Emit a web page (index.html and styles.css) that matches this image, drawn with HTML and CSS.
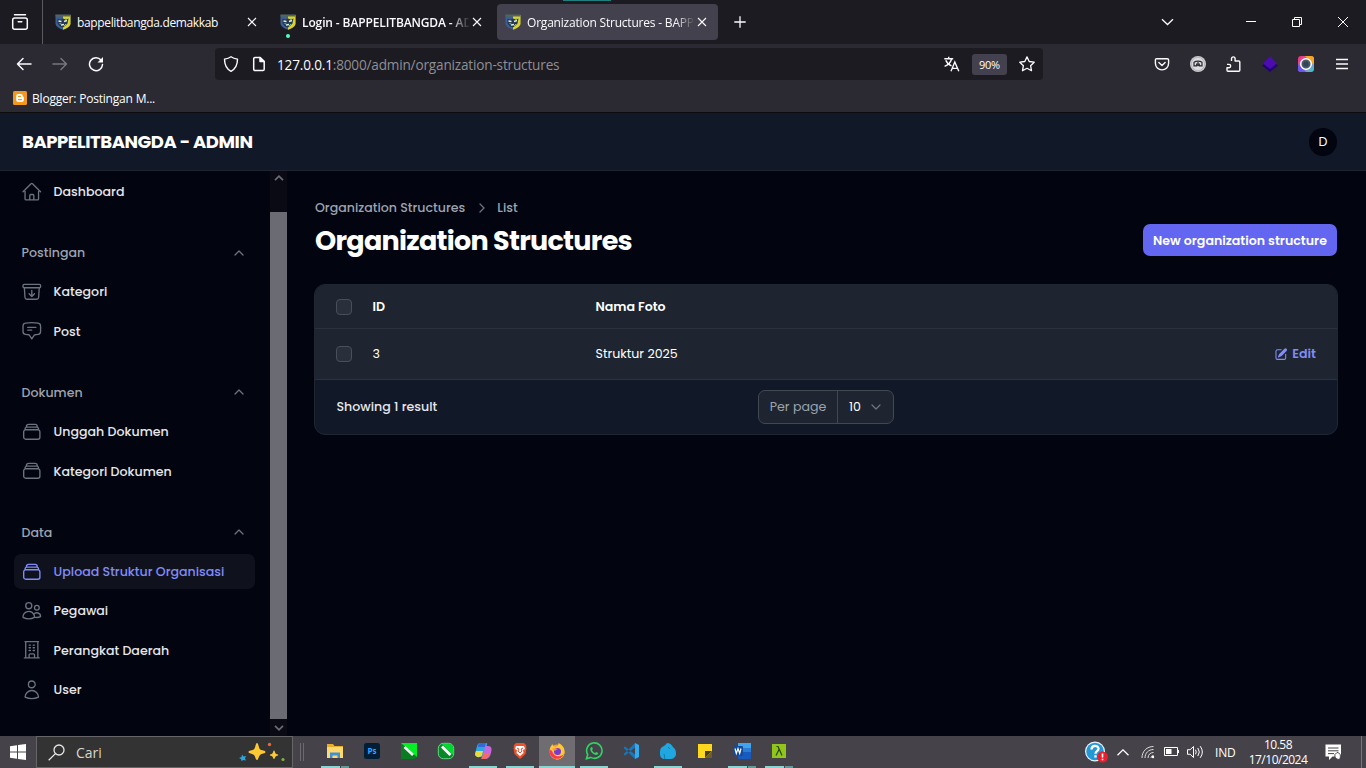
FILE: index.html
```html
<!DOCTYPE html>
<html lang="id">
<head>
<meta charset="utf-8">
<title>Organization Structures - BAPPELITBANGDA - ADMIN</title>
<link rel="stylesheet" href="styles.css">
</head>
<body>
<svg class="defs" aria-hidden="true">
  <symbol id="crest" viewBox="0 0 16 16">
    <path d="M.5.8h15v8.700c0 3-4 5-7.500 6.200C4.500 14.500.5 12.500.5 9.500z" fill="#3b5f98"/>
    <path d="M8 1h7.500v8.500c0 3-4 5-7.500 6.200z" fill="#dcd328"/>
    <path d="M.5.6h15v1.900H.5z" fill="#5c6545"/>
    <path d="M2.500 4.500l3 1 2.500-1 3 1 2.500-1-1 5-2 2-2.500 2-3-1-2.500-3z" fill="#27394d"/>
    <path d="M3.500 7l3 .5M9 7.500l3-1M6 11l3-.5" stroke="#e1eee0" stroke-width="1.500"/>
    <path d="M4.500 9.500l2 .6M10 5l2 .2M9 12l2-2" stroke="#65bdca" stroke-width="1"/>
  </symbol>
  <symbol id="close" viewBox="0 0 10 10"><path d="M1 1l8 8M9 1L1 9" fill="none" stroke="#fbfbfe" stroke-width="1.100"/></symbol>
  <symbol id="up" viewBox="0 0 10 6"><path d="M1 5l4-4 4 4" fill="none" stroke="currentColor" stroke-width="1.300" stroke-linecap="round" stroke-linejoin="round"/></symbol>
  <symbol id="stack" viewBox="0 0 24 24"><path d="M6 6.878V6a2.250 2.250 0 012.250-2.250h7.500A2.250 2.250 0 0118 6v.878m-12 0c.235-.083.487-.128.75-.128h10.500c.263 0 .515.045.75.128m-12 0A2.250 2.250 0 004.500 9v.878m13.500-3A2.250 2.250 0 0119.500 9v.878m0 0a2.246 2.246 0 00-.75-.128H5.250c-.263 0-.515.045-.75.128m15 0A2.250 2.250 0 0121 12v6a2.250 2.250 0 01-2.250 2.250H5.250A2.250 2.250 0 013 18v-6c0-.98.626-1.813 1.500-2.122"/></symbol>
</svg>

<header class="tabs">
  <div class="recent"><svg width="18" height="18" viewBox="0 0 18 18" fill="none" stroke="#fbfbfe" stroke-width="1.500" stroke-linecap="round"><rect x="1.700" y="5" width="14.600" height="11.200" rx="2"/><path d="M3.500 1.700h11M7.200 8.700h3.600"/></svg></div>
  <div class="tab"><svg class="fav"><use href="#crest"/></svg><span class="tab-t t1">bappelitbangda.demakkab</span><svg class="x"><use href="#close"/></svg></div>
  <div class="tab"><svg class="fav"><use href="#crest"/></svg><span class="tab-t bold fade">Login - BAPPELITBANGDA - ADMIN</span><svg class="x"><use href="#close"/></svg><i class="dot"></i></div>
  <div class="tab active"><svg class="fav"><use href="#crest"/></svg><span class="tab-t t3 fade">Organization Structures - BAPPELITBANGDA</span><svg class="x"><use href="#close"/></svg><i class="glint"></i></div>
  <svg class="plus" viewBox="0 0 12 12"><path d="M6 .3v11.400M.3 6h11.400" stroke="#fbfbfe" stroke-width="1.300"/></svg>
  <div class="win">
    <svg class="w-down" viewBox="0 0 13 8"><path d="M1 1.200l5.500 5.300L12 1.200" fill="none" stroke="#fbfbfe" stroke-width="1.300"/></svg>
    <svg class="w-min" viewBox="0 0 10 10"><path d="M0 4.500h10" stroke="#fff"/></svg>
    <svg class="w-max" viewBox="0 0 10 10" fill="none" stroke="#fff"><path d="M.5 2.500h7v7h-7zM2.500 2.500v-2h7v7h-2"/></svg>
    <svg class="w-x" viewBox="0 0 10 10"><path d="M0 0l10 10M10 0L0 10" stroke="#fff"/></svg>
  </div>
</header>

<section class="toolbar">
  <div class="nav">
    <svg width="16" height="16" viewBox="0 0 16 16" fill="none" stroke="#fbfbfe" stroke-width="1.500" stroke-linecap="round" stroke-linejoin="round"><path d="M15 8H1.500M7 2.500L1.500 8 7 13.500"/></svg>
    <svg width="16" height="16" viewBox="0 0 16 16" fill="none" stroke="#77767e" stroke-width="1.500" stroke-linecap="round" stroke-linejoin="round"><path d="M1 8h13.500M9 2.500L14.500 8 9 13.500"/></svg>
    <svg width="16" height="16" viewBox="0 0 16 16"><path d="M13 4A6.500 6.500 0 1 0 14.500 8.500" fill="none" stroke="#fbfbfe" stroke-width="1.500" stroke-linecap="round"/><path d="M15 1v5.500H9.500z" fill="#fbfbfe"/></svg>
  </div>
  <div class="url">
    <svg width="16" height="16" viewBox="0 0 16 16" fill="none" stroke="#fbfbfe" stroke-width="1.400" stroke-linejoin="round"><path d="M8 .8c2 1.500 4 2 6.500 2.300 0 5-.8 9.400-6.500 12.200C2.300 12.500 1.500 8.100 1.500 3.100 4 2.800 6 2.300 8 .8z"/></svg>
    <svg width="16" height="16" viewBox="0 0 16 16" fill="none" stroke="#fbfbfe" stroke-width="1.500" stroke-linejoin="round"><path d="M4 1.500h5l4.200 4v7.700a1.300 1.300 0 0 1-1.300 1.300H4a1.300 1.300 0 0 1-1.300-1.300V2.800A1.300 1.300 0 0 1 4 1.500z"/><path d="M9 1.500v4h4.200z" fill="#fbfbfe"/></svg>
    <span class="addr"><b>127.0.0.1</b>:8000/admin/organization-structures</span>
    <svg class="tr" viewBox="0 0 16 16" fill="none" stroke="#fbfbfe" stroke-width="1.400"><path d="M.3 2.700h8.900M4.700.7v2M1.800 4.200c1 2.500 3.200 4.600 5.700 5.600M7.600 3C6.600 6.400 4 9 .6 10.300M7 15.300l3.800-9.300 4 9.300M8.300 12.400h5.200"/></svg>
    <span class="zoom">90%</span>
    <svg width="16" height="16" viewBox="0 0 16 16" fill="none" stroke="#fbfbfe" stroke-width="1.300" stroke-linejoin="round"><path d="M8 .9l2.200 4.600 5 .7-3.600 3.500.9 5L8 12.300l-4.500 2.400.9-5L.8 6.200l5-.7z"/></svg>
  </div>
  <div class="ext">
    <svg viewBox="0 0 16 16" fill="none" stroke="#fbfbfe" stroke-width="1.400" stroke-linecap="round" stroke-linejoin="round"><path d="M2.700 2.700h10.600c.8 0 1.300.6 1.300 1.300v3.300a6.600 6.600 0 0 1-13.200 0V4c0-.7.5-1.300 1.300-1.300z"/><path d="M4.900 6.500L8 9.400l3.100-2.900"/></svg>
    <svg viewBox="0 0 16 16"><circle cx="8" cy="8" r="8" fill="#c9c9ce"/><circle cx="8" cy="8" r="6.500" fill="#dedee2" stroke="#aaa9b2" stroke-width=".7"/><path d="M4 6.200c2-1.500 6-1.500 8 0v3.600H9.300V7.500M4 6v3.800h2.700V7.500M8 6v4" fill="none" stroke="#29282c" stroke-width="1.200"/></svg>
    <svg viewBox="0 0 16 16" fill="none" stroke="#fbfbfe" stroke-width="1.400" stroke-linejoin="round"><path d="M5.500 5V2.700a1.800 1.800 0 0 1 3.600 0V5h3.700a1 1 0 0 1 1 1v8.300a1 1 0 0 1-1 1H2a1 1 0 0 1-1-1v-2.500h2a1.700 1.700 0 0 0 0-3.400H1"/></svg>
    <svg viewBox="0 0 16 16"><path d="M0 9.500L8 4l8 5.500L8 16z" fill="#22006f"/><path d="M1 7.500L8 .3l7 7.200-7 5.500z" fill="#4b0cb0"/></svg>
    <svg viewBox="0 0 16 16"><defs><linearGradient id="ca" x1="0" y1="0" x2="1" y2="1"><stop offset="0" stop-color="#f52a69"/><stop offset=".5" stop-color="#c06cc4"/><stop offset="1" stop-color="#21d8d0"/></linearGradient></defs><rect width="16" height="16" rx="3" fill="url(#ca)"/><path d="M7 0h6a3 3 0 0 1 3 3v6z" fill="#f7a620"/><path d="M0 8l8 8H3a3 3 0 0 1-3-3z" fill="#6a55f5"/><circle cx="8" cy="8" r="5.300" fill="#485868" stroke="#fff" stroke-width="1.500"/><circle cx="8" cy="8" r="2.600" fill="#304456"/></svg>
    <svg viewBox="0 0 16 16"><path d="M2 3.500h12M2 8h12M2 12.500h12" stroke="#fbfbfe" stroke-width="1.300"/></svg>
  </div>
</section>
<section class="bookmarks">
  <svg width="14" height="14" viewBox="0 0 14 14"><rect width="14" height="14" rx="1.500" fill="#f3981f"/><path d="M5 3h2.800a2 2 0 0 1 2 2c0 1 .8.500 1 1.200V9a2 2 0 0 1-2 2H5.200a2 2 0 0 1-2-2V5A2 2 0 0 1 5 3z" fill="#fff"/><path d="M5.500 5.400h2M5.500 8.600h3" stroke="#f3981f" stroke-width="1.100" stroke-linecap="round"/></svg>
  <span>Blogger: Postingan M...</span>
</section>

<div class="topbar"><strong>BAPPELITBANGDA - ADMIN</strong><span class="avatar">D</span></div>

<div class="page">
  <aside class="side">
    <nav class="menu">
      <div class="group">
        <a class="item"><svg viewBox="0 0 24 24"><path d="M2.250 12l8.954-8.955c.44-.439 1.152-.439 1.591 0L21.750 12M4.500 9.750v10.125c0 .621.504 1.125 1.125 1.125H9.750v-4.875c0-.621.504-1.125 1.125-1.125h2.250c.621 0 1.125.504 1.125 1.125V21h4.125c.621 0 1.125-.504 1.125-1.125V9.750M8.250 21h8.250"/></svg><span>Dashboard</span></a>
      </div>
      <div class="group">
        <div class="label"><span>Postingan</span><svg class="chev"><use href="#up"/></svg></div>
        <a class="item"><svg viewBox="0 0 24 24"><path d="M20.250 7.500l-.625 10.632a2.250 2.250 0 01-2.247 2.118H6.622a2.250 2.250 0 01-2.247-2.118L3.750 7.500m8.250 3v6.750m0 0l-3-3m3 3l3-3M3.375 7.500h17.250c.621 0 1.125-.504 1.125-1.125v-1.500c0-.621-.504-1.125-1.125-1.125H3.375c-.621 0-1.125.504-1.125 1.125v1.500c0 .621.504 1.125 1.125 1.125z"/></svg><span>Kategori</span></a>
        <a class="item"><svg viewBox="0 0 24 24"><path d="M7.500 8.250h9m-9 3H12m-9.750 1.510c0 1.600 1.123 2.994 2.707 3.227 1.129.166 2.270.293 3.423.379.35.026.67.210.865.501L12 21l2.755-4.133a1.140 1.140 0 01.865-.501 48.172 48.172 0 003.423-.379c1.584-.233 2.707-1.626 2.707-3.228V6.741c0-1.602-1.123-2.995-2.707-3.228A48.394 48.394 0 0012 3c-2.392 0-4.744.175-7.043.513C3.373 3.746 2.250 5.140 2.250 6.741v6.018z"/></svg><span>Post</span></a>
      </div>
      <div class="group">
        <div class="label"><span>Dokumen</span><svg class="chev"><use href="#up"/></svg></div>
        <a class="item"><svg><use href="#stack"/></svg><span>Unggah Dokumen</span></a>
        <a class="item"><svg><use href="#stack"/></svg><span>Kategori Dokumen</span></a>
      </div>
      <div class="group">
        <div class="label"><span>Data</span><svg class="chev"><use href="#up"/></svg></div>
        <a class="item current"><svg><use href="#stack"/></svg><span>Upload Struktur Organisasi</span></a>
        <a class="item"><svg viewBox="0 0 24 24"><path d="M15 19.128a9.380 9.380 0 002.625.372 9.337 9.337 0 004.121-.952 4.125 4.125 0 00-7.533-2.493M15 19.128v-.003c0-1.113-.285-2.160-.786-3.070M15 19.128v.106A12.318 12.318 0 018.624 21c-2.331 0-4.512-.645-6.374-1.766l-.001-.109a6.375 6.375 0 0111.964-3.070M12 6.375a3.375 3.375 0 11-6.750 0 3.375 3.375 0 016.750 0zm8.250 2.250a2.625 2.625 0 11-5.250 0 2.625 2.625 0 015.250 0z"/></svg><span>Pegawai</span></a>
        <a class="item"><svg viewBox="0 0 24 24"><path d="M3.750 21h16.500M4.500 3h15M5.250 3v18m13.500-18v18M9 6.750h1.500m-1.500 3h1.500m-1.500 3h1.500m3-6H15m-1.500 3H15m-1.500 3H15M9 21v-3.375c0-.621.504-1.125 1.125-1.125h3.750c.621 0 1.125.504 1.125 1.125V21"/></svg><span>Perangkat Daerah</span></a>
        <a class="item"><svg viewBox="0 0 24 24"><path d="M15.750 6a3.750 3.750 0 11-7.500 0 3.750 3.750 0 017.500 0zM4.501 20.118a7.500 7.500 0 0114.998 0A17.933 17.933 0 0112 21.750c-2.676 0-5.216-.584-7.499-1.632z"/></svg><span>User</span></a>
      </div>
    </nav>
    <div class="scroll">
      <svg viewBox="0 0 10 6"><path d="M1 5.200l4-4 4 4" fill="none" stroke="#6c6c72" stroke-width="1.700"/></svg>
      <div class="thumb"></div>
      <svg viewBox="0 0 10 6"><path d="M1 .8l4 4 4-4" fill="none" stroke="#6c6c72" stroke-width="1.700"/></svg>
    </div>
  </aside>
  <main class="main">
    <div class="crumbs"><span>Organization Structures</span><svg viewBox="0 0 6 10"><path d="M1 1l4 4-4 4" fill="none" stroke="#71717a" stroke-width="1.300" stroke-linecap="round"/></svg><span>List</span></div>
    <div class="head"><h1>Organization Structures</h1><button class="new">New organization structure</button></div>
    <div class="card">
      <div class="row th"><i class="box"></i><span>ID</span><span>Nama Foto</span></div>
      <div class="row td"><i class="box"></i><span>3</span><span>Struktur 2025</span>
        <a class="edit"><svg viewBox="0 0 20 20" fill="currentColor"><path d="M5.433 13.917l1.262-3.155A4 4 0 0 1 7.580 9.420l6.920-6.918a2.121 2.121 0 0 1 3 3l-6.920 6.918c-.383.383-.84.685-1.343.886l-3.154 1.262a.5.5 0 0 1-.65-.65Z"/><path d="M3.500 5.750c0-.69.56-1.250 1.250-1.250H10A.75.75 0 0 0 10 3H4.750A2.750 2.750 0 0 0 2 5.750v9.500A2.750 2.750 0 0 0 4.750 18h9.500A2.750 2.750 0 0 0 17 15.250V10a.75.75 0 0 0-1.500 0v5.250c0 .69-.56 1.250-1.250 1.250h-9.500c-.69 0-1.250-.56-1.250-1.250v-9.500Z"/></svg><span>Edit</span></a></div>
      <div class="foot"><span>Showing 1 result</span>
        <div class="per"><span class="pp">Per page</span><span class="num">10<svg class="chev"><use href="#up"/></svg></span></div></div>
    </div>
  </main>
</div>

<footer class="task">
  <div class="start"><svg width="16" height="16" viewBox="0 0 16 16" fill="#fff"><path d="M0 2.200L7 1.200v6.300H0zM8 1.100L16 0v7.500H8zM0 8.500h7v6.300l-7-1zM8 8.500h8V16l-8-1.100z"/></svg></div>
  <div class="search">
    <svg width="17" height="17" viewBox="0 0 17 17" fill="none" stroke="#e6e6e6" stroke-width="1.300"><circle cx="11" cy="6" r="5"/><path d="M7.400 9.600L.7 16.300"/></svg>
    <span>Cari</span>
    <svg class="spark" width="46" height="20" viewBox="0 0 46 20"><path d="M18 1c1.500 0 1.700 5 3 6.300S26.500 8.500 26.500 10s-4 1.500-5.500 3-1.500 5-3 5-1.500-3.700-3-5-5.500-1.500-5.500-3 4-1.500 5.500-2.700S16.500 1 18 1z" fill="#fcc934"/><path d="M35 8.500c.8 0 .9 2.300 1.600 3s2.600.7 2.600 1.500-1.900.8-2.600 1.500-.8 2.500-1.600 2.500-.9-1.800-1.600-2.500-2.600-.7-2.600-1.500 1.900-.8 2.600-1.500.8-3 1.600-3z" fill="#fcc934"/><path d="M3 12.500l1.500 2 2.500-.5-1 2.500 1 2-2.500-.5L2.500 19 2 17l-2-1 2.500-1z" fill="#2ea5dc"/><circle cx="30.500" cy="2.500" r="1.700" fill="#e06a3a"/><circle cx="44" cy="17.500" r="1.600" fill="#7cb342"/></svg>
  </div>
  <div class="grip"></div>
  <div class="apps">
    <div class="app run2"><svg viewBox="0 0 18 18"><path d="M1 2h6l1.500 2H17v12H1z" fill="#e8ad2d"/><path d="M1 5h16v11H1z" fill="#ffd970"/><path d="M4 16v-5.500h10V16h-2.500v-2.500h-5V16z" fill="#3f93d3"/></svg></div>
    <div class="app"><svg viewBox="0 0 18 18"><rect x="1" y="1" width="16" height="16" rx="2.500" fill="#001e36"/><text x="9" y="12.300" text-anchor="middle" class="ps">Ps</text></svg></div>
    <div class="app"><svg viewBox="0 0 18 18"><path d="M1 1h16v12a4 4 0 0 1-4 4H1z" fill="#0a7d22"/><path d="M1 1h16v14z" fill="#00ef25"/><path d="M4.500 5l8.500 8" stroke="#fff" stroke-width="2.600"/></svg></div>
    <div class="app"><svg viewBox="0 0 18 18"><rect x="1.300" y="1.300" width="15.400" height="15.400" rx="5" fill="#088828" stroke="#72ee91" stroke-width=".8"/><path d="M5 2h7a4 4 0 0 1 4 4v7z" fill="#00d92d"/><path d="M5 4.500l8.500 8.500" stroke="#fff" stroke-width="2.800"/></svg></div>
    <div class="app run"><svg viewBox="0 0 18 18"><path d="M6 1h6c2 0 1 2 0 5l-2 7c-1 3-3 2-5 2-5 0-4-4-3-7s1-7 4-7z" fill="#29a7de"/><path d="M2 9h7l-1 4c-1 3-7 3-7-1z" fill="#eadb3c"/><path d="M11 4h3c4 0 4 3 3 7s-3 6-6 6H7c2-1 3-6 4-13z" fill="#c767de"/><path d="M9 11h7c-1 3-2 5-5 6H7c1-1 1.500-3 2-6z" fill="#f26d5f"/><path d="M6 1h6c-1 2-1 3-1 4H4c0-2 1-4 2-4z" fill="#3269d4"/></svg></div>
    <div class="app run"><svg viewBox="0 0 18 18"><path d="M5 1h8l2 2 .5 3-1 6L9 17l-5.500-5-1-6L3 3z" fill="#f0502a"/><path d="M5 4h8l1 3-2 1 .5 3L9 14l-3.500-3L6 8 4 7z" fill="#fff"/><path d="M6 6l2 1-1 2 2 2 2-2-1-2 2-1" fill="none" stroke="#ed512d"/></svg></div>
    <div class="app on"><svg viewBox="0 0 18 18"><circle cx="9" cy="10" r="7.500" fill="#ff9824"/><path d="M1.700 9C1.500 5 4 3 4.500 2c.2 2 1 2.500 3 3 2-.5 3-2 3-4 4 2 6.500 5 6 10a7.500 7.500 0 0 1-8 6.500z" fill="#ffc936"/><path d="M1.500 9a7.500 7.500 0 0 0 14.500 3c-3 3-8 3-10 .5S3.500 6 1.500 9z" fill="#f63b57"/><circle cx="9.500" cy="9.500" r="3.500" fill="#7a3ad0"/><path d="M4 6.500c2-.8 3.500 0 5.500.5l-2 1.500H6z" fill="#ff9824"/></svg></div>
    <div class="app run"><svg viewBox="0 0 18 18"><path d="M1.500 16.700l1.200-4.200a7.700 7.700 0 1 1 3 2.900z" fill="none" stroke="#30d264" stroke-width="1.600"/><path d="M6.700 5c.7-.3 1 1.600 1.200 2L7 8c.7 1.500 1.500 2.200 3 3l1.200-1 2 1c0 1.500-1.200 2-2.500 1.900C8 12.500 5.500 10 5.200 7.300 5.100 6.200 6 5 6.700 5z" fill="#30d264"/></svg></div>
    <div class="app"><svg viewBox="0 0 18 18"><path d="M13 1l4 2v12l-4 2z" fill="#36a9ed"/><path d="M13 1v4.500L3 13.500l-1.500-1.300zM13 17v-4.500L3 4.500 1.500 5.800z" fill="#1678bf"/></svg></div>
    <div class="app run"><svg viewBox="0 0 18 18"><path d="M2 6c2-2 4-2 6-5 4 0 5 3 7 5s2 4 2 6-2 5-5 5H6c-3 0-5-2-5-5s0-4 1-6z" fill="#20a7df"/><path d="M5 12c0 2 1 3 1 5M9 5l2 2" stroke="#087fb4" stroke-width="1"/></svg></div>
    <div class="app"><svg viewBox="0 0 18 18"><path d="M2 2h14v14H2z" fill="#ffd71c"/><path d="M9 9h7l-7 7z" fill="#463c26"/><path d="M9 16l7-7v7z" fill="#6b5f2a"/></svg></div>
    <div class="app run2"><svg viewBox="0 0 18 18"><rect x="5" y="1" width="13" height="16" rx="1" fill="#185abd"/><path d="M5 1h13v5H5z" fill="#41a5ee"/><path d="M5 6h13v4H5z" fill="#2b7cd3"/><rect x="0" y="4" width="10" height="10" rx="1" fill="#124a9e"/><path d="M2 6.500l1.300 5 1.700-5 1.700 5L8 6.500" fill="none" stroke="#fff" stroke-width="1.200"/></svg></div>
    <div class="app run2"><svg viewBox="0 0 18 18"><rect x="2" y="2" width="14" height="14" fill="#92c51c"/><path d="M6.500 4.500h1.500l4 9M9 7.500l-3 6" fill="none" stroke="#24420b" stroke-width="1.200"/></svg></div>
  </div>
  <div class="tray">
    <svg class="help" viewBox="0 0 24 22"><circle cx="11" cy="10.500" r="10" fill="#eaf7fe"/><circle cx="11" cy="10.500" r="8.800" fill="#2498d7"/><path d="M7.500 8.500c0-5 7-4.500 7-.8 0 2.500-3 2.500-3 5M11.500 14.300v2.200" fill="none" stroke="#fff" stroke-width="2.300"/><circle cx="18.500" cy="16" r="5.500" fill="#e5212e"/><path d="M18.500 12.500v4M18.500 17.700v1.600" stroke="#fff" stroke-width="1.600"/></svg>
    <svg class="tc" viewBox="0 0 12 7"><path d="M.5 6.300L6 .9l5.500 5.400" fill="none" stroke="#fff" stroke-width="1.300"/></svg>
    <svg class="wf" viewBox="0 0 14 14" fill="none" stroke="#ddd" stroke-width="1"><path d="M1 13C1 6 6 1.500 12.500 1.500M4 13c0-5 3.500-8.500 8.500-8.500M7 13c0-3.500 2.500-5.500 5.500-5.500M10 13c0-1.500 1-2.500 2.500-2.500"/><circle cx="12" cy="12" r="1.200" fill="#fff" stroke="none"/></svg>
    <svg class="bt" viewBox="0 0 16 10"><path d="M.5.5h13v8H.5z" fill="none" stroke="#fff"/><path d="M2 2h5.500v5H2zM14 3h1v3h-1z" fill="#fff"/></svg>
    <svg class="vo" viewBox="0 0 17 14" fill="none" stroke="#fff"><path d="M.5 4.700h2.700L6.500 1.500v11L3.200 9.300H.5zM8.500 4.700q1.500 2.300 0 4.600M10.800 3q3 4 0 8M13.200 1.200q4.300 5.800 0 11.600"/></svg>
    <span class="ind">IND</span>
    <div class="clock"><span>10.58</span><span>17/10/2024</span></div>
    <svg class="nt" viewBox="0 0 17 17"><path d="M.5.500h15.500v12H7.500L4 16v-3.500H.5z" fill="#fff"/><path d="M3 4h10.500M3 6.800h10.500M3 9.600h6" stroke="#444349" stroke-width="1"/><path d="M12 8.500c4 .5 4 4 2.500 7-3-.2-5-1.500-4.500-5z" fill="#fff" stroke="#444349"/></svg>
    <i class="peek"></i>
  </div>
</footer>
</body>
</html>
```

FILE: styles.css
```css
* { box-sizing: border-box; }
body { margin: 0; width: 1366px; height: 768px; overflow: hidden; display: flex; flex-direction: column; background: #02040f; color: #fff; font-family: "Segoe UI", "Open Sans", sans-serif; font-size: 12px; }
svg { flex: none; display: block; }
span, strong, h1, button { white-space: nowrap; }
.defs { display: none; }

/* Browser chrome */
.tabs { flex: none; height: 44px; background: #1c1b22; display: flex; align-items: center; }
.recent { width: 43px; height: 44px; border-right: 1px solid #5b5a63; padding-left: 11px; display: flex; align-items: center; margin-right: 4px; }
.tab { position: relative; width: 222px; height: 36px; margin-right: 3px; padding-left: 8px; border-radius: 4px; display: flex; align-items: center; color: #fbfbfe; }
.active { background: #42414d; width: 221px; }
.fav { width: 16px; height: 16px; margin-right: 6px; }
.tab-t { width: 168px; overflow: hidden; line-height: 20px; padding-top: 1px; }
.fade { mask-image: linear-gradient(to right, #000 148px, transparent 168px); }
.t1 { letter-spacing: -.36px; }
.t3 { letter-spacing: -.2px; }
.bold { font-weight: 600; letter-spacing: -.12px; }
.x { width: 10px; height: 10px; margin-left: 2px; }
.dot { position: absolute; left: 14px; bottom: 2px; width: 4px; height: 4px; border-radius: 50%; background: #54ffbd; }
.glint { position: absolute; left: 66px; top: -4px; width: 48px; height: 1px; background: #217f80; }
.plus { width: 12px; height: 12px; margin-left: 12.500px; }
.win { margin-left: auto; display: flex; align-items: center; padding-right: 18px; }
.w-down { width: 13px; height: 8px; margin-right: 72px; }
.w-min, .w-max, .w-x { width: 10px; height: 10px; }
.w-min, .w-max { margin-right: 36px; }
.toolbar { flex: none; height: 40px; background: #2b2a33; display: flex; align-items: center; }
.nav { width: 215px; padding-left: 16px; display: flex; gap: 20px; }
.url { width: 828px; height: 32px; border-radius: 4px; background: #1c1b22; padding: 0 8px; display: flex; align-items: center; }
.url > svg:nth-child(2) { margin-left: 12px; }
.addr { margin-left: 10px; width: 667px; padding-top: 1px; font-size: 13.600px; letter-spacing: -.18px; color: #8f8e95; }
.addr b { font-weight: 400; color: #fbfbfe; }
.tr { width: 16px; height: 16px; }
.zoom { width: 35px; height: 21px; margin: 0 12px; border-radius: 3px; background: #42414d; font-size: 11px; letter-spacing: -.3px; line-height: 21px; text-align: center; }
.ext { flex: 1; display: flex; justify-content: flex-end; gap: 20px; padding-right: 16px; }
.ext svg { width: 16px; height: 16px; }
.bookmarks { flex: none; height: 29px; padding: 0 0 0 13px; display: flex; align-items: center; gap: 5px; background: #2b2a33; letter-spacing: -.2px; border-bottom: 1px solid #0c0c0d; }
.bookmarks span { padding-top: 1px; }

/* Admin panel */
.topbar { flex: none; height: 58px; background: #111827; border-bottom: 1px solid #1f2530; padding: 0 29px 0 22px; display: flex; align-items: center; justify-content: space-between; }
.topbar, .page { font-family: Poppins, Inter, sans-serif; }
.topbar strong { font-size: 18px; letter-spacing: -.45px; }
.avatar { width: 28px; height: 28px; border-radius: 50%; background: #02040f; font-size: 12.600px; line-height: 28px; text-align: center; }
.page { flex: 1; min-height: 0; display: flex; }
.side { width: 287px; display: flex; }
.menu { width: 270px; padding: 2.800px 15px 0 14px; display: flex; flex-direction: column; gap: 25.900px; }
.group { display: flex; flex-direction: column; gap: 4px; }
.item, .label { height: 35.300px; display: flex; align-items: center; font-size: 12.600px; font-weight: 500; }
.item span, .label span { padding-top: 1px; }
.item { padding-left: 7px; gap: 11px; border-radius: 7px; color: #e5e7eb; }
.item svg { width: 21.600px; height: 21.600px; fill: none; stroke: #6b7280; stroke-width: 1.500; stroke-linecap: round; stroke-linejoin: round; }
.label { padding: 0 11px 0 7.500px; justify-content: space-between; color: #9ca3af; }
.chev { width: 10px; height: 6px; color: #6b7280; }
.item.current { background: #0f121d; color: #818cf8; }
.item.current svg { stroke: #818cf8; }
.scroll { width: 17px; background: #090a14; display: flex; flex-direction: column; align-items: center; padding: 4px 0 5px; }
.scroll svg { width: 10px; height: 6px; }
.thumb { width: 17px; flex: 1; margin: 31px 0 6px; background: #6a6b73; }
.main { flex: 1; padding: 27px 29px 0 28px; }
.crumbs { height: 20px; display: flex; align-items: center; font-size: 12.600px; font-weight: 500; color: #9ca3af; }
.crumbs svg { width: 6px; height: 10px; margin: 0 12px 0 14px; }
.head { height: 32px; margin-top: 6px; display: flex; align-items: center; justify-content: space-between; }
h1 { margin: 2px 0 0; font-size: 27px; line-height: 32px; font-weight: 700; letter-spacing: -.72px; }
.new { width: 194px; height: 32px; margin: 0; padding: 1px 0 0; border: 0; border-radius: 7px; background: #6366f1; color: #fff; font: 600 12.600px/31px Poppins, Inter, sans-serif; }
.card { margin: 28px -1px 0; height: 151px; border: 1px solid #202733; border-radius: 11px; overflow: hidden; background: #111827; }
.row { display: grid; grid-template-columns: 36.500px 223px 1fr auto; align-items: center; padding: 0 21px; background: #1e2530; border-bottom: 1px solid #2b323e; font-size: 12.600px; }
.th { height: 44px; font-weight: 600; }
.td { height: 51px; }
.box { width: 16px; height: 16px; border-radius: 4px; border: 1px solid #494f59; background: #2a303b; }
.edit { display: flex; align-items: center; gap: 4px; color: #818cf8; font-weight: 600; }
.edit svg { width: 14.400px; height: 14.400px; }
.foot { height: 54px; padding: 0 21.500px; display: grid; grid-template-columns: 1fr auto 1fr; align-items: center; font-size: 12.600px; font-weight: 500; color: #e5e7eb; }
.per { width: 136px; height: 34px; border: 1px solid #414753; border-radius: 7px; background: #1e2530; display: flex; font-weight: 400; }
.pp { width: 79px; border-right: 1px solid #414753; line-height: 32px; text-align: center; color: #9ca3af; }
.num { flex: 1; display: flex; align-items: center; padding: 0 12px 0 11px; justify-content: space-between; color: #fff; }
.num .chev { transform: scaleY(-1); }

/* Taskbar */
.task { flex: none; height: 32px; background: #454349; display: flex; align-items: stretch; }
.start { width: 36px; padding-left: 10px; display: flex; align-items: center; }
.search { width: 257px; border: 1px solid #666568; background: #333; display: flex; align-items: center; padding: 0 7px 0 11px; font-size: 14px; color: #d6d6d6; }
.search span { margin-left: 11px; }
.spark { margin-left: auto; }
.grip { width: 4px; height: 18px; margin: 7px 12px 0 7px; border: solid #6c6a70; border-width: 0 1px; }
.apps { display: flex; }
.app { width: 37px; display: grid; place-content: center; border-bottom: 2px solid transparent; position: relative; }
.app svg { width: 18px; height: 18px; }
.run::after, .run2::after, .on::after { content: ""; position: absolute; left: 5px; bottom: -2px; width: 28px; height: 2px; background: #8ad5d2; }
.run2::after { background: linear-gradient(to right, #8ad5d2 19px, #454349 19px, #454349 20px, #659997 20px); }
.on { background: #6f6d72; margin: 0 .5px; width: 36px; }
.on::after { left: 0; width: 36px; }
.ps { font: 700 8px "Open Sans", sans-serif; fill: #31a8ff; }
.tray { margin-left: auto; display: flex; align-items: center; }
.help { width: 24px; height: 22px; }
.tc { width: 12px; height: 7px; margin-left: 9px; }
.wf { width: 14px; height: 14px; margin-left: 12px; }
.bt { width: 16px; height: 10px; margin-left: 9px; }
.vo { width: 17px; height: 14px; margin-left: 7px; }
.ind { width: 20px; margin-left: 11px; letter-spacing: -.2px; }
.clock { width: 62px; margin-left: 12px; display: flex; flex-direction: column; line-height: 15px; letter-spacing: -.5px; align-items: center; }
.nt { width: 17px; height: 17px; margin-left: 16px; }
.peek { width: 1px; height: 32px; background: #777; margin: 0 4px 0 19px; }
```
